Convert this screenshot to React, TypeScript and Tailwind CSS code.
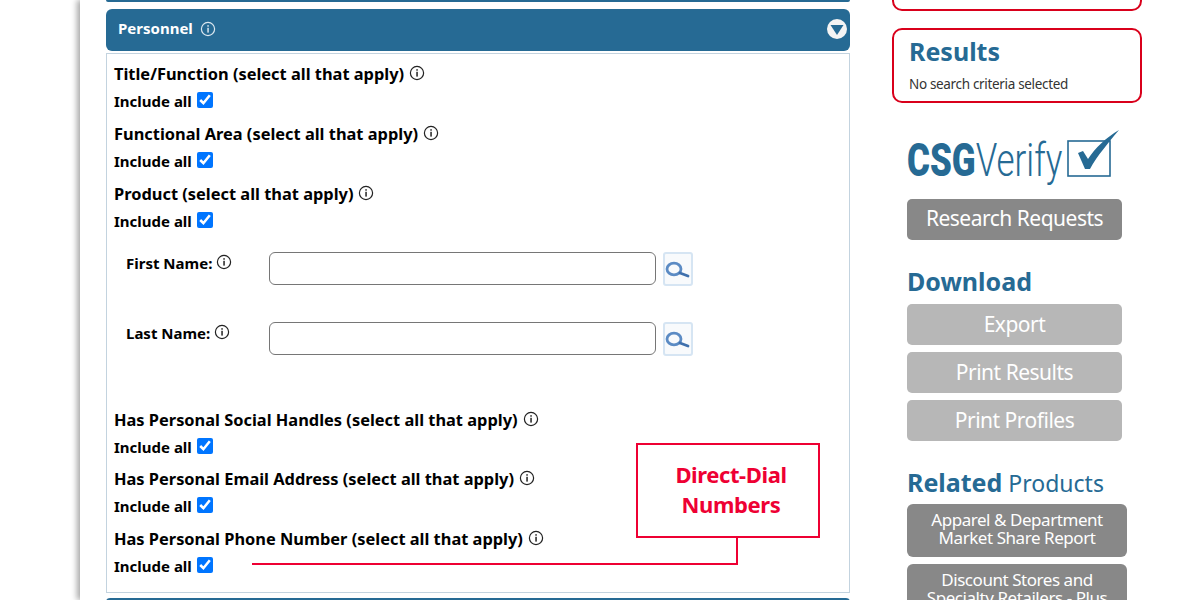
import React from "react";

const labelFont = "font-['Noto_Sans','DejaVu_Sans',sans-serif]";

const InfoIcon: React.FC<{ className?: string }> = ({ className }) => (
  <svg viewBox="0 0 16 16" className={`h-[16px] w-[16px] shrink-0 ${className ?? ""}`} fill="none">
    <circle cx="8" cy="8" r="6.6" stroke="currentColor" strokeWidth="1.2" />
    <rect x="7.3" y="6.8" width="1.5" height="4.8" fill="currentColor" />
    <rect x="7.3" y="4.2" width="1.5" height="1.5" fill="currentColor" />
  </svg>
);

const CheckGroup: React.FC<{ title: string; className?: string }> = ({ title, className }) => (
  <div className={className}>
    <div className="flex h-[24px] items-center">
      <span className="text-[16.4px] font-bold text-black">{title}</span>
      <InfoIcon className="mb-[3px] ml-[5px] text-[#222]" />
    </div>
    <div className="mt-[3px] flex h-[24px] items-center">
      <span className="text-[15px] font-bold text-black">Include all</span>
      <input type="checkbox" defaultChecked className="mb-[2px] ml-[5px] h-[16px] w-[16px] accent-[#0075ff]" />
    </div>
  </div>
);

const NameField: React.FC<{ label: string; className?: string }> = ({ label, className }) => (
  <div className={`flex items-start ${className ?? ""}`}>
    <div className="flex w-[155px] items-center pl-[12px]">
      <span className="text-[15px] font-bold text-black">{label}</span>
      <InfoIcon className="ml-[4px] mb-[2px] text-[#222]" />
    </div>
    <input type="text" className="h-[33px] w-[387px] rounded-[6px] border border-[#767676] bg-white" />
    <button className="ml-[7px] flex h-[34px] w-[30px] items-center justify-center rounded-[3px] border-2 border-[#d6e5f3] bg-[#f8fafc]">
      <svg viewBox="0 0 30 34" className="h-[34px] w-[30px] shrink-0" fill="none">
        <ellipse cx="11" cy="17" rx="7" ry="5.8" stroke="#5b8bc4" strokeWidth="2.8" />
        <path d="M17 21 L25 24" stroke="#3f70ad" strokeWidth="2.8" strokeLinecap="round" />
      </svg>
    </button>
  </div>
);

const SideButton: React.FC<{ text: string; muted?: boolean }> = ({ text, muted }) => (
  <div
    className={`flex h-[41px] w-[215px] items-center justify-center rounded-[5px] text-[21px] tracking-[-0.5px] text-white ${
      muted ? "bg-[#b7b7b7]" : "bg-[#888888] pb-[2px]"
    }`}
  >
    {text}
  </div>
);

export default function App() {
  return (
    <div className={`relative flex h-[600px] w-[1200px] overflow-hidden bg-white ${labelFont}`}>
      <div className="h-full w-[80px] shrink-0 bg-white" />

      {/* main column */}
      <div className="h-full w-[790px] shrink-0 pl-[26px] shadow-[-3px_0_6px_rgba(0,0,0,0.35)] [clip-path:inset(0_0_0_-12px)]">
        <div className="h-[2px] w-[744px] rounded-b-[6px] bg-[#266a94]" />
        <div className="mt-[7px] flex h-[42px] w-[744px] items-center rounded-[6px] bg-[#266a94] pl-[12px] pr-[3px] text-white">
          <span className="pb-[4px] text-[15px] font-bold">Personnel</span>
          <InfoIcon className="mb-[2px] ml-[7px] text-[#dbe7ef]" />
          <svg viewBox="0 0 20 20" className="mb-[2px] ml-auto h-[20px] w-[20px]">
            <circle cx="10" cy="10" r="10" fill="#f4f4f4" />
            <path d="M3.5 6 H16.5 L10 16 Z" fill="#266a94" />
          </svg>
        </div>
        <div className="mt-[2px] h-[540px] w-[744px] border border-[#c3d3df] pl-[7px] pt-[8px]">
          <CheckGroup title="Title/Function (select all that apply)" />
          <CheckGroup title="Functional Area (select all that apply)" className="mt-[9px]" />
          <CheckGroup title="Product (select all that apply)" className="mt-[9px]" />
          <NameField label="First Name:" className="mt-[19px]" />
          <NameField label="Last Name:" className="mt-[36px]" />
          <CheckGroup title="Has Personal Social Handles (select all that apply)" className="mt-[52px]" />
          <CheckGroup title="Has Personal Email Address (select all that apply)" className="mt-[8px]" />
          <CheckGroup title="Has Personal Phone Number (select all that apply)" className="mt-[9px]" />
        </div>
        <div className="mt-[5px] h-[4px] w-[744px] rounded-t-[6px] bg-[#266a94]" />
      </div>

      {/* right column */}
      <div className="h-full w-[250px] shrink-0 pl-[22px]">
        <div className="-mt-[10px] h-[21px] w-[250px] rounded-[10px] border-2 border-[#d9001b]" />
        <div className="mt-[17px] h-[75px] w-[250px] rounded-[10px] border-2 border-[#d9001b] pl-[15px] pt-[4px]">
          <div className="text-[25px] leading-[34px] font-bold text-[#266a94]">Results</div>
          <div className="mt-[6px] text-[13.5px] leading-[20px] tracking-[-0.33px] text-[#333]">No search criteria selected</div>
        </div>

        <div className="ml-[15px] mt-[25px] flex h-[58px] items-start">
          <div className="w-[160px] shrink-0">
            <div className="mt-[7px] flex origin-left scale-x-[0.76] items-baseline whitespace-nowrap text-[#266a94]">
              <span className="font-['Roboto',sans-serif] text-[46px] leading-[50px] font-black">CSG</span>
              <span className="font-['Roboto',sans-serif] text-[46px] leading-[50px] font-light">Verify</span>
            </div>
          </div>
          <svg viewBox="0 0 56 58" className="h-[58px] w-[56px] shrink-0" fill="none">
            <rect x="1" y="13" width="42" height="35" stroke="#266a94" strokeWidth="1.6" />
            <path d="M11 25 L16 23 L21 31 C28 20 40 9 52 2 C42 14 30 28 23 41 H18 Z" fill="#266a94" />
          </svg>
        </div>

        <div className="ml-[15px] mt-[13px]">
          <SideButton text="Research Requests" />
          <div className="mt-[24px] text-[25px] leading-[34px] font-bold text-[#266a94]">Download</div>
          <div className="mt-[6px] flex flex-col gap-[7px]">
            <SideButton text="Export" muted />
            <SideButton text="Print Results" muted />
            <SideButton text="Print Profiles" muted />
          </div>
          <div className="mt-[24px] text-[23px] leading-[34px] text-[#266a94]">
            <span className="text-[25px] font-bold">Related</span> Products
          </div>
          <div className="mt-[4px] flex h-[53px] w-[220px] items-center justify-center rounded-[6px] bg-[#888888] pb-[4px] text-center text-[17px] leading-[18px] tracking-[-0.45px] text-white">
            <span>
              Apparel &amp; Department
              <br />
              Market Share Report
            </span>
          </div>
          <div className="mt-[7px] flex h-[53px] w-[220px] items-center justify-center rounded-[6px] bg-[#888888] pb-[4px] text-center text-[17px] leading-[18px] tracking-[-0.45px] text-white">
            <span>
              Discount Stores and
              <br />
              Specialty Retailers - Plus
            </span>
          </div>
        </div>
      </div>

      {/* callout over the form */}
      <div className="absolute left-[636px] top-[443px] flex h-[95px] w-[184px] items-center justify-center border-2 border-[#ee0033] bg-white pb-[3px] pl-[6px] text-center text-[22px] leading-[30px] font-bold tracking-[-0.4px] text-[#ee0033]">
        <span>
          Direct-Dial
          <br />
          Numbers
        </span>
      </div>
      <div className="absolute left-[252px] top-[538px] h-[27px] w-[486px] border-b-2 border-r-2 border-[#ee0033]" />
    </div>
  );
}
